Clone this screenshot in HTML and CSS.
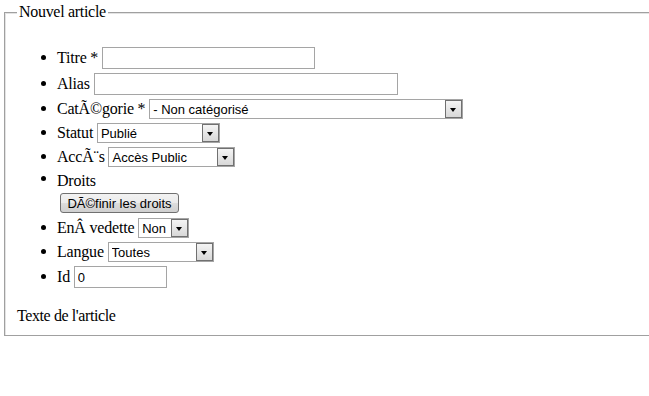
FILE: index.html
```html
<!DOCTYPE html>
<html lang="fr">
<head>
  <meta charset="UTF-8">
  <title>Nouvel article</title>
  <link rel="stylesheet" href="styles.css">
</head>
<body>
<form class="article-form">
  <fieldset class="panel">
    <legend>Nouvel article</legend>
    <ul class="fields">
      <li class="row row-input">
        <label for="title">Titre *</label>
        <input type="text" id="title" class="field w-title">
      </li>
      <li class="row row-input">
        <label for="alias">Alias</label>
        <input type="text" id="alias" class="field w-alias">
      </li>
      <li class="row">
        <label for="catid">CatÃ©gorie *</label>
        <span class="dropdown w-cat">
          <select id="catid"><option>- Non catégorisé</option></select>
          <span class="arrow"></span>
        </span>
      </li>
      <li class="row">
        <label for="state">Statut</label>
        <span class="dropdown w-state">
          <select id="state"><option>Publié</option></select>
          <span class="arrow"></span>
        </span>
      </li>
      <li class="row">
        <label for="access">AccÃ¨s</label>
        <span class="dropdown w-access">
          <select id="access"><option>Accès Public</option></select>
          <span class="arrow"></span>
        </span>
      </li>
      <li class="row row-rights">
        <label>Droits</label>
        <div class="rights">
          <button type="button" class="btn">DÃ©finir les droits</button>
        </div>
      </li>
      <li class="row">
        <label for="featured">EnÂ vedette</label>
        <span class="dropdown w-featured">
          <select id="featured"><option>Non</option></select>
          <span class="arrow"></span>
        </span>
      </li>
      <li class="row">
        <label for="language">Langue</label>
        <span class="dropdown w-lang">
          <select id="language"><option>Toutes</option></select>
          <span class="arrow"></span>
        </span>
      </li>
      <li class="row row-input">
        <label for="id">Id</label>
        <input type="text" id="id" class="field w-id" value="0">
      </li>
    </ul>
    <p class="text-label">Texte de l'article</p>
  </fieldset>
</form>
</body>
</html>
```

FILE: styles.css
```css
html, body {
  overflow: hidden;
}

body {
  margin: 0;
  font-family: "Liberation Serif", "Times New Roman", serif;
  font-size: 15px;
  color: #000;
  background: #fff;
}

.article-form {
  margin: 0;
}

/* the panel runs past the right edge of the window */
.panel {
  margin: 3px -20px 0 4px;
  padding: 0 12px 0 12px;
  border: 1px solid #a0a0a0;
  box-shadow: inset 1px 1px 0 #e3e3e3, 0 1px 0 #e3e3e3;
}

.panel legend {
  padding: 0 2px;
  margin-left: 0;
  background: #fff;
  line-height: 18px;
  font-size: 16px;
  letter-spacing: -0.3px;
}

.fields {
  margin: 24px 0 0 0;
  padding-left: 40px;
  font-size: 16px;
  letter-spacing: -0.2px;
}

.row {
  line-height: 18px;
  height: 24px;
}

.row-input {
  height: 26px;
}

.row label {
  vertical-align: middle;
}

.field {
  box-sizing: border-box;
  height: 22px;
  margin: 2px 0;
  padding: 1px 3px;
  border: 1px solid #a5a5a5;
  font: 13px "Liberation Sans", Arial, sans-serif;
  letter-spacing: 0;
  color: #000;
  vertical-align: middle;
}

.w-title { width: 213px; }
.w-alias { width: 304px; }
.w-id { width: 93px; }

.dropdown {
  display: inline-block;
  position: relative;
  vertical-align: middle;
  margin: 2px 0;
  letter-spacing: 0;
}

.dropdown select {
  -webkit-appearance: none;
  appearance: none;
  box-sizing: border-box;
  width: 100%;
  height: 20px;
  margin: 0;
  padding: 0 20px 0 3px;
  border: 1px solid #a5a5a5;
  border-radius: 0;
  background: #fff;
  font: 13px "Liberation Sans", Arial, sans-serif;
  color: #000;
  display: block;
}

.dropdown .arrow {
  position: absolute;
  top: 1px;
  right: 1px;
  bottom: 1px;
  width: 17px;
  border: 1px solid #707070;
  box-sizing: border-box;
  background: linear-gradient(#f4f4f4, #d8d8d8);
  pointer-events: none;
}

.dropdown .arrow::after {
  content: "";
  position: absolute;
  left: 4px;
  top: 7px;
  border-left: 3.5px solid transparent;
  border-right: 3.5px solid transparent;
  border-top: 4px solid #000;
}

.w-cat { width: 314px; }
.w-state { width: 123px; }
.w-access { width: 127px; }
.w-featured { width: 51px; }
.w-lang { width: 106px; }

.row-rights {
  height: 47px;
}

.row-rights label {
  display: inline-block;
  margin-top: 3px;
}

.rights {
  padding: 3px 0 0 3px;
}

.btn {
  box-sizing: border-box;
  width: 119px;
  height: 20px;
  padding: 0 4px;
  border: 1px solid #707070;
  border-radius: 3px;
  background: linear-gradient(#f2f2f2 0%, #ebebeb 50%, #dddddd 51%, #cfcfcf 100%);
  font: 13px "Liberation Sans", Arial, sans-serif;
  letter-spacing: 0;
  color: #000;
}

.text-label {
  margin: 17px 0 10px 0;
  line-height: 18px;
  font-size: 16px;
  letter-spacing: -0.4px;
}
```
